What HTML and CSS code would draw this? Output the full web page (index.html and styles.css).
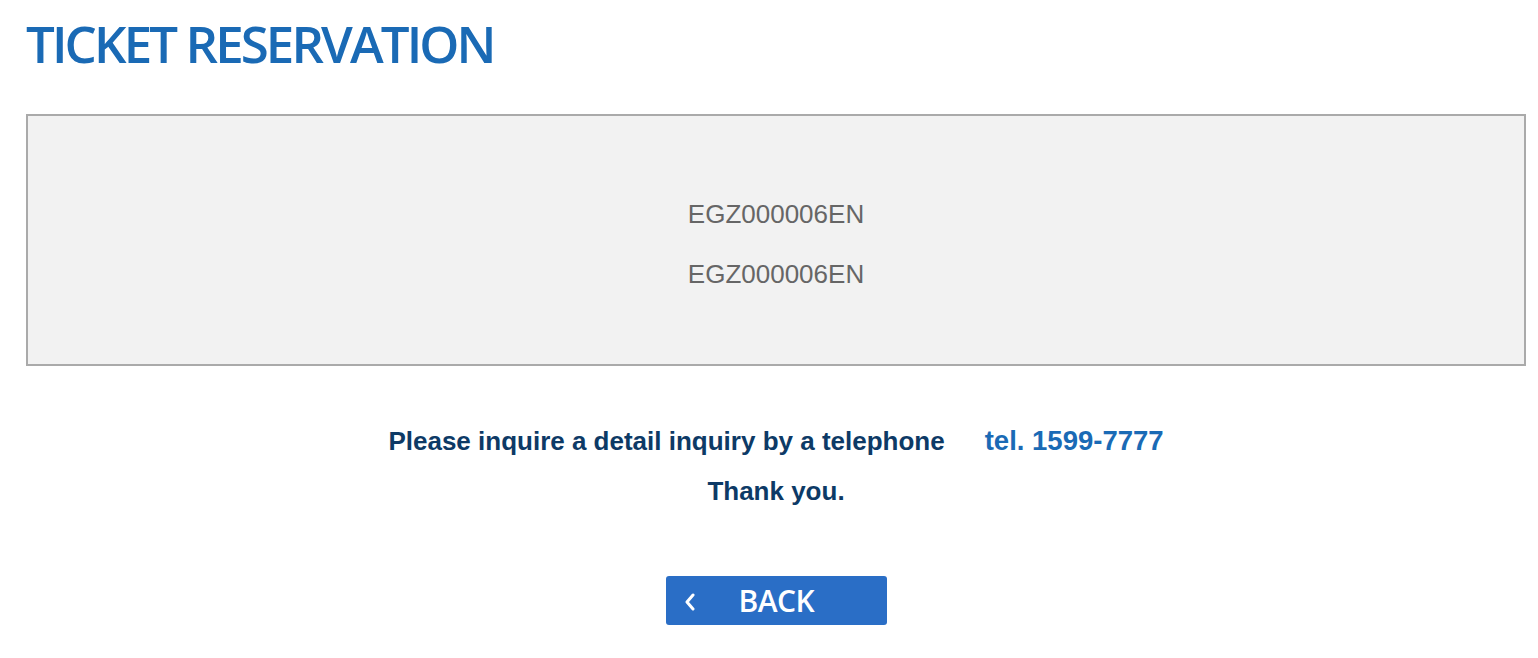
FILE: index.html
```html
<!DOCTYPE html>
<html>
<head>
<meta charset="utf-8">
<link rel="stylesheet" href="styles.css">
</head>
<body>
<div class="page">
  <h1 class="title">TICKET RESERVATION</h1>
  <div class="codes">
    <p class="code">EGZ000006EN</p>
    <p class="code">EGZ000006EN</p>
  </div>
  <div class="notice">
    <p class="line1"><span>Please inquire a detail inquiry by a telephone</span><span class="tel">tel. 1599-7777</span></p>
    <p class="line2">Thank you.</p>
  </div>
  <div class="actions">
    <a class="back" href="#"><svg class="chev" width="12" height="18" viewBox="0 0 12 18"><path d="M9 2 L3 9 L9 16" fill="none" stroke="#fff" stroke-width="3" stroke-linecap="round" stroke-linejoin="round"/></svg><span class="back-label">BACK</span></a>
  </div>
</div>
</body>
</html>
```
FILE: styles.css
```css
html, body { margin: 0; padding: 0; background: #fff; }
.page { padding: 0 12px 0 26px; }
.title {
  margin: 0;
  padding-top: 15px;
  height: 98px;
  box-sizing: border-box;
  font-family: "Open Sans", sans-serif;
  font-weight: 600;
  font-size: 51px;
  letter-spacing: -2.9px;
  color: #1a6ab5;
  line-height: 56px;
}
.codes {
  box-sizing: border-box;
  height: 252px;
  border: 2px solid #aaaaaa;
  background: #f2f2f2;
  display: flex;
  flex-direction: column;
  align-items: center;
  justify-content: center;
  gap: 29px;
  margin-top: 16px;
  padding-top: 8px;
}
.code {
  margin: 0;
  font-family: "Liberation Sans", Arial, sans-serif;
  font-size: 26px;
  line-height: 31px;
  color: #666666;
}
.notice {
  text-align: center;
  font-family: "Liberation Sans", Arial, sans-serif;
  font-weight: bold;
  color: #0d3a66;
  font-size: 26px;
  margin-top: 56px;
}
.notice p { margin: 0; line-height: 38px; }
.line1 { display: flex; justify-content: center; align-items: baseline; gap: 40px; }
.line2 { margin-top: 12px !important; }
.tel { color: #1a6ab5; font-size: 27.5px; }
.actions { display: flex; justify-content: center; margin-top: 66px; }
.back {
  box-sizing: border-box;
  width: 221px;
  height: 49px;
  background: #2a6ec6;
  border-radius: 3px;
  display: flex;
  align-items: center;
  color: #fff;
  text-decoration: none;
  font-family: "Open Sans", sans-serif;
  font-weight: 600;
  font-size: 30px;
  padding-left: 18px;
}
.chev { width: 12px; height: 18px; margin-right: 43px; margin-top: 2px; }
.back-label { letter-spacing: -0.5px; }
```
